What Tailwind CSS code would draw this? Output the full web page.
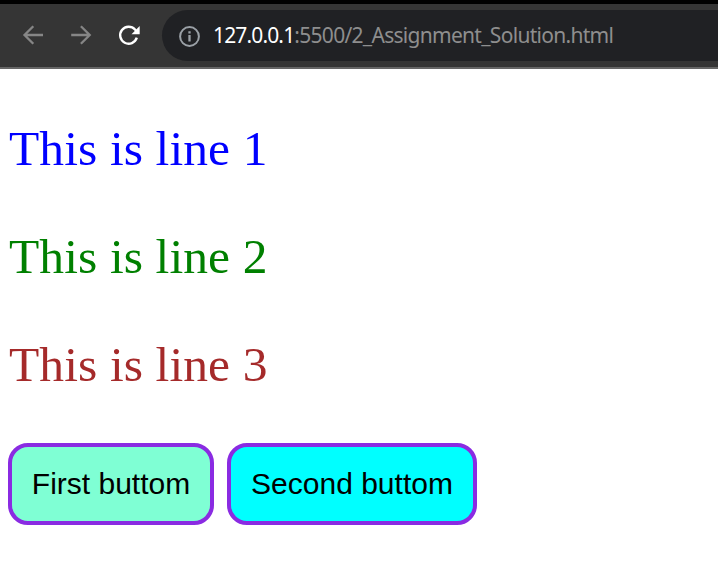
<!DOCTYPE html>
<html lang="en">
<head>
<meta charset="utf-8">
<title>Assignment</title>
<script src="https://cdn.jsdelivr.net/npm/@tailwindcss/browser@4"></script>
</head>
<body class="bg-white w-[718px] h-[576px] overflow-hidden flex flex-col">
<header class="h-[69px] shrink-0 bg-[#353535] border-t-4 border-t-black border-b-2 border-b-[#666] flex items-start pt-[6px]">
  <svg class="ml-[21px] mt-[13px] w-6 h-6 shrink-0" viewBox="0 0 24 24" fill="none" stroke="#868686" stroke-width="2.3"><path d="M22 12H3.5M12.3 3.3L3.5 12l8.800 8.700"/></svg>
  <svg class="ml-6 mt-[13px] w-6 h-6 shrink-0" viewBox="0 0 24 24" fill="none" stroke="#868686" stroke-width="2.3"><path d="M2.200 12h18.500M11.900 3.300l8.800 8.700-8.800 8.700"/></svg>
  <svg class="ml-6 mt-[13px] w-6 h-6 shrink-0" viewBox="0 0 24 24"><path d="M19.800 14.700A8.500 8.500 0 1 1 18 6.500l1.500 1.700" fill="none" stroke="#fff" stroke-width="2.4"/><path d="M22.700 3v8.200h-8.200z" fill="#fff"/></svg>
  <div class="ml-[21px] flex-1 h-[51px] rounded-l-full bg-[#202124] flex items-center">
    <svg class="ml-4 mt-px w-[23px] h-[23px] shrink-0" viewBox="0 0 23 23" fill="none" stroke="#9aa0a6" stroke-width="2"><circle cx="11.5" cy="11.500" r="9.400"/><path d="M11.500 10v6.500M11.500 6.300v2.300" stroke-width="2.300"/></svg>
    <span class="ml-[12px] -mt-px whitespace-nowrap text-[21px] leading-none tracking-[-0.71px] text-[#8e8e8e] font-['Noto_Sans',sans-serif]"><span class="text-white tracking-[-0.85px]">127.0.0.1</span>:5500/2_Assignment_Solution.html</span>
  </div>
</header>
<main class="pl-2 pt-[53px] font-['Liberation_Serif',serif] text-[49.5px] leading-[54px] flex flex-col gap-[54px]">
  <p class="pl-px tracking-[0.1px] text-[blue]">This is line 1</p>
  <p class="pl-px tracking-[0.1px] text-[green]">This is line 2</p>
  <p class="pl-px tracking-[0.1px] text-[brown]">This is line 3</p>
  <div class="-mt-[3px] flex gap-[13px] font-['Liberation_Sans',sans-serif] text-[30px] leading-none text-black">
    <button class="w-[206px] h-[82px] rounded-[20px] border-4 border-[blueviolet] bg-[aquamarine]">First buttom</button>
    <button class="w-[250px] h-[82px] rounded-[20px] border-4 border-[blueviolet] bg-[cyan]">Second buttom</button>
  </div>
</main>
</body>
</html>
